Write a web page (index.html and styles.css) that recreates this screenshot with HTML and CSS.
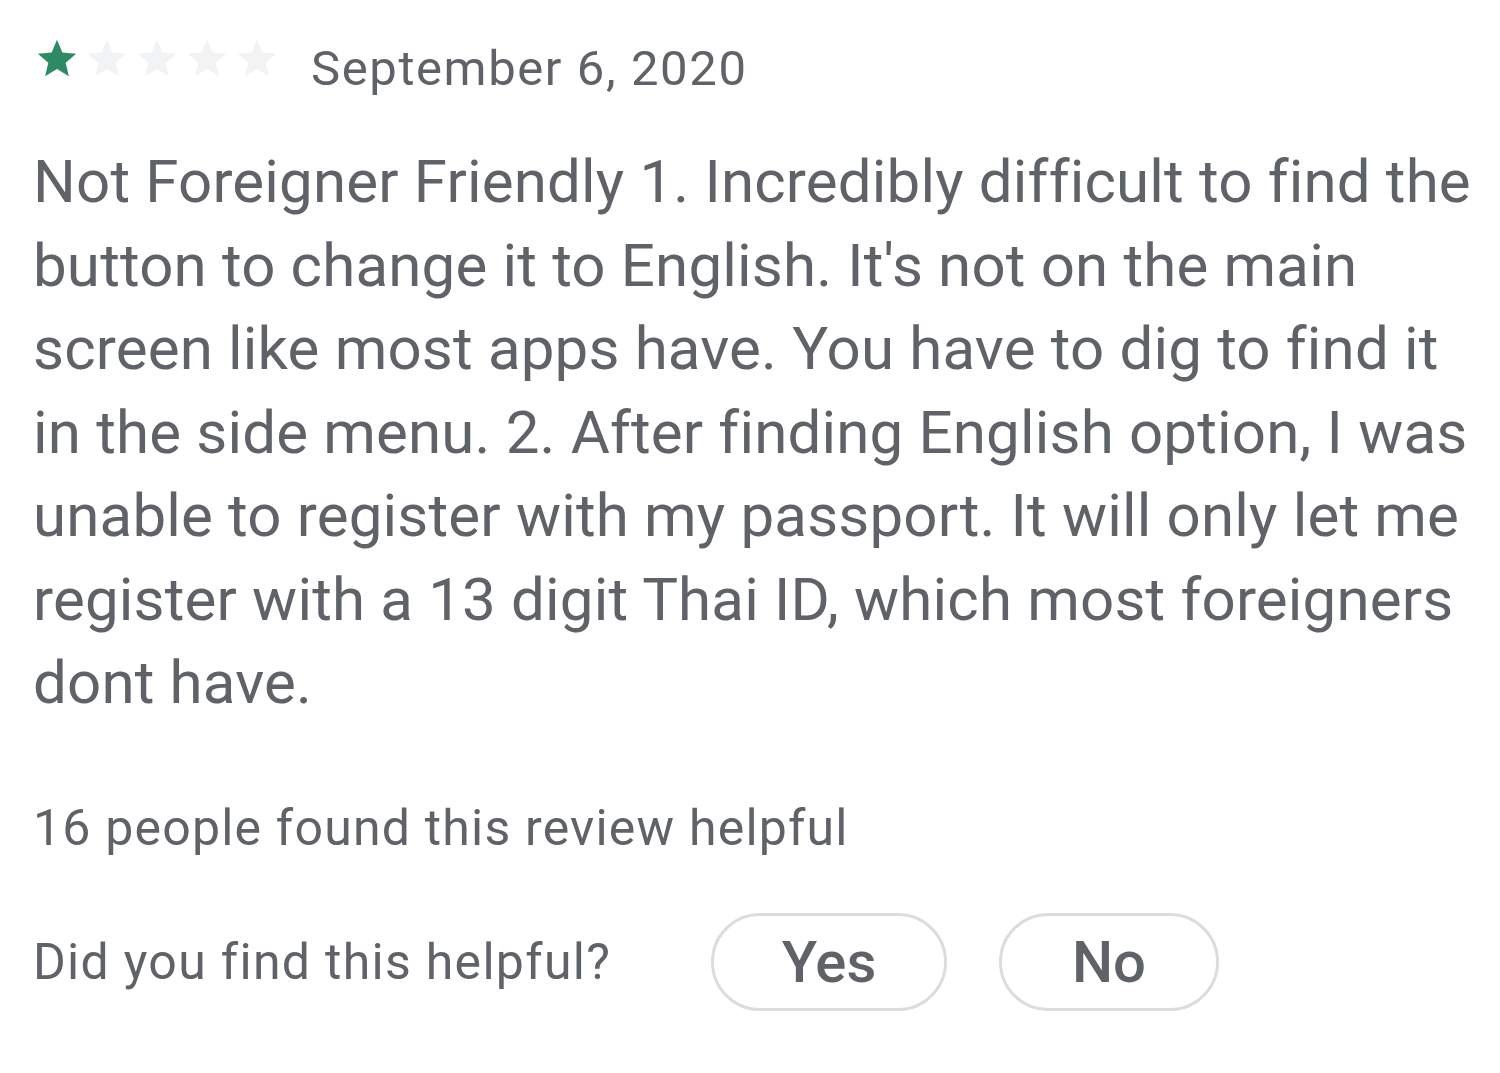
FILE: index.html
```html
<!DOCTYPE html>
<html>
<head>
<meta charset="utf-8">
<link rel="stylesheet" href="styles.css">
</head>
<body>
<div class="review">
  <div class="header">
    <div class="stars">
      <svg class="star on" viewBox="0 0 24 24"><path d="M12 17.27L18.18 21l-1.64-7.03L22 9.24l-7.19-.61L12 2 9.19 8.63 2 9.24l5.46 4.73L5.82 21z"/></svg>
      <svg class="star" viewBox="0 0 24 24"><path d="M12 17.27L18.18 21l-1.64-7.03L22 9.24l-7.19-.61L12 2 9.19 8.63 2 9.24l5.46 4.73L5.82 21z"/></svg>
      <svg class="star" viewBox="0 0 24 24"><path d="M12 17.27L18.18 21l-1.64-7.03L22 9.24l-7.19-.61L12 2 9.19 8.63 2 9.24l5.46 4.73L5.82 21z"/></svg>
      <svg class="star" viewBox="0 0 24 24"><path d="M12 17.27L18.18 21l-1.64-7.03L22 9.24l-7.19-.61L12 2 9.19 8.63 2 9.24l5.46 4.73L5.82 21z"/></svg>
      <svg class="star" viewBox="0 0 24 24"><path d="M12 17.27L18.18 21l-1.64-7.03L22 9.24l-7.19-.61L12 2 9.19 8.63 2 9.24l5.46 4.73L5.82 21z"/></svg>
    </div>
    <span class="date">September 6, 2020</span>
  </div>
  <p class="body">Not Foreigner Friendly 1. Incredibly difficult to find the button to change it to English. It's not on the main screen like most apps have. You have to dig to find it in the side menu. 2. After finding English option, I was unable to register with my passport. It will only let me register with a 13 digit Thai ID, which most foreigners dont have.</p>
  <p class="count">16 people found this review helpful</p>
  <div class="ask">
    <span class="question">Did you find this helpful?</span>
    <button class="btn yes">Yes</button>
    <button class="btn no">No</button>
  </div>
</div>
</body>
</html>
```

FILE: styles.css
```css
html, body {
  margin: 0;
  padding: 0;
  background: #fff;
}
body {
  font-family: Roboto, "Liberation Sans", sans-serif;
  color: #5f6368;
  font-variant-ligatures: none;
}
.review {
  padding: 34px 0 0 33px;
  width: 1460px;
}
.header {
  display: flex;
  align-items: center;
  height: 64px;
}
.stars {
  display: flex;
  gap: 4px;
  margin-left: 1px;
  margin-bottom: 14px;
}
.star {
  width: 46px;
  height: 46px;
  fill: #f1f3f4;
}
.star.on {
  fill: #2e8a63;
}
.date {
  font-size: 49px;
  letter-spacing: 1.6px;
  margin-left: 31px;
  margin-top: 4px;
}
.body {
  margin: 42px 0 0 0;
  font-size: 60px;
  line-height: 83.5px;
  letter-spacing: 0.18px;
}
.count {
  margin: 68px 0 0 0;
  font-size: 50px;
  line-height: 70px;
  letter-spacing: 1.2px;
}
.ask {
  display: flex;
  align-items: center;
  margin-top: 50px;
}
.question {
  font-size: 50px;
  letter-spacing: 1.3px;
  width: 678px;
}
.btn {
  font-family: Roboto, "Liberation Sans", sans-serif;
  font-size: 58px;
  font-weight: 500;
  color: #5f6368;
  background: #fff;
  border: 3px solid #dadce0;
  border-radius: 50px;
  height: 98px;
  padding: 0;
}
.yes {
  width: 236px;
}
.no {
  width: 220px;
  margin-left: 52px;
}
```
